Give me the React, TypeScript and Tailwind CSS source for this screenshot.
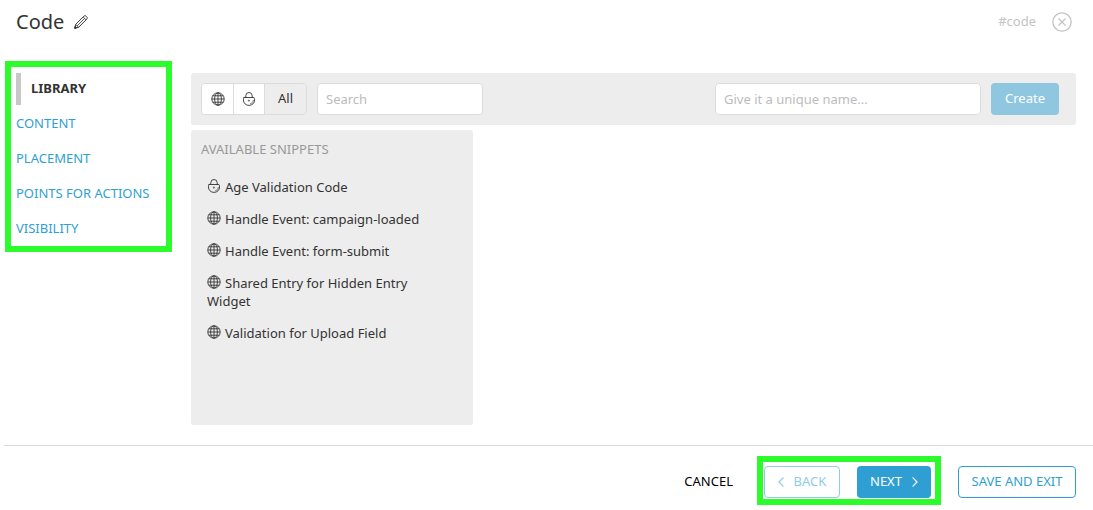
import { useState } from 'react';

type Scope = 'global' | 'private';

type Snippet = {
  name: string;
  scope: Scope;
};

const snippets: Snippet[] = [
  { name: 'Age Validation Code', scope: 'private' },
  { name: 'Handle Event: campaign-loaded', scope: 'global' },
  { name: 'Handle Event: form-submit', scope: 'global' },
  { name: 'Shared Entry for Hidden Entry Widget', scope: 'global' },
  { name: 'Validation for Upload Field', scope: 'global' },
];

const sections = ['Library', 'Content', 'Placement', 'Points for Actions', 'Visibility'];

const toAnchor = (text: string) => text.toLowerCase().replace(/\s+/g, '-');

function GlobeIcon({ className = '' }: { className?: string }) {
  return (
    <svg
      className={className}
      width="14"
      height="14"
      viewBox="0 0 14 14"
      fill="none"
      stroke="currentColor"
      strokeWidth="0.9"
      aria-hidden="true"
    >
      <circle cx="7" cy="7" r="6.2" />
      <ellipse cx="7" cy="7" rx="3.4" ry="6.2" />
      <path d="M7 0.8v12.4M0.8 7h12.4M1.7 3.8h10.6M1.7 10.2h10.6" />
    </svg>
  );
}

function LockIcon({ className = '' }: { className?: string }) {
  return (
    <svg
      className={className}
      width="14"
      height="14"
      viewBox="0 0 14 14"
      fill="none"
      stroke="currentColor"
      strokeWidth="0.9"
      strokeLinecap="round"
      strokeLinejoin="round"
      aria-hidden="true"
    >
      <path d="M2.1 5.5h9.8c0.5 0.8 0.7 1.6 0.7 2.4 0 3.2-2.4 5.5-5.6 5.5S1.400 11.100 1.400 7.900c0-0.800 0.200-1.600 0.700-2.400z" />
      <path d="M3.800 5.400V3.700a3.200 3.200 0 0 1 6.400 0v1.700" />
      <path d="M6.400 8.200h1.200L7 9.200z" fill="currentColor" strokeWidth="0.500" />
      <path d="M8.800 11.600h0.100M9.900 10.900h0.100M10.800 9.900h0.100M11.200 8.700h0.100" />
    </svg>
  );
}

function PencilIcon() {
  return (
    <svg
      width="14"
      height="14"
      viewBox="0 0 14 14"
      fill="none"
      stroke="currentColor"
      strokeWidth="1"
      strokeLinejoin="round"
      aria-hidden="true"
    >
      <path d="M0.700 13.300l1-3.900 8.100-8.100c0.700-0.700 1.700-0.700 2.400 0l0.500 0.500c0.700 0.700 0.700 1.700 0 2.400l-8.100 8.100z" />
      <path d="M1.700 9.400l2.900 2.900M9.100 2l2.900 2.900M3.100 10.900l7.500-7.500" strokeWidth="0.800" />
      <path d="M0.700 13.300l0.500-1.900 1.400 1.400z" fill="currentColor" />
    </svg>
  );
}

function Chevron({ direction }: { direction: 'left' | 'right' }) {
  return (
    <svg
      width="6"
      height="10"
      viewBox="0 0 6 10"
      fill="none"
      stroke="currentColor"
      strokeWidth="1.2"
      strokeLinecap="round"
      strokeLinejoin="round"
      aria-hidden="true"
    >
      <path d={direction === 'left' ? 'M5 0.8L1 5l4 4.2' : 'M1 0.8L5 5 1 9.2'} />
    </svg>
  );
}

export default function App() {
  const [active, setActive] = useState('Library');
  const [filter, setFilter] = useState<Scope | 'all'>('all');
  const [query, setQuery] = useState('');
  const [name, setName] = useState('');

  const visible = snippets.filter(
    (snippet) =>
      (filter === 'all' || snippet.scope === filter) &&
      snippet.name.toLowerCase().includes(query.toLowerCase()),
  );

  const filterTone = (value: Scope | 'all') =>
    filter === value ? 'bg-[#ededed]' : 'bg-white';

  return (
    <div className="min-h-screen bg-white font-['Noto_Sans',sans-serif] text-[13px] text-[#333]">
      <header className="flex h-11 items-center justify-between pr-[21px] pl-4">
        <div className="flex items-center gap-2.5">
          <h1 className="text-xl">Code</h1>
          <button type="button" aria-label="Rename">
            <PencilIcon />
          </button>
        </div>
        <div className="flex items-center gap-4 text-[#c4c4c4]">
          <span>#code</span>
          <button type="button" aria-label="Close">
            <svg
              width="20"
              height="20"
              viewBox="0 0 20 20"
              fill="none"
              stroke="currentColor"
              strokeWidth="1.3"
              aria-hidden="true"
            >
              <circle cx="10" cy="10" r="9.2" />
              <path d="M6.500 6.500l7 7M13.500 6.500l-7 7" />
            </svg>
          </button>
        </div>
      </header>

      <div className="flex items-start pt-[17px] pr-[17px] pl-[5px]">
        <nav className="w-[167px] shrink-0 border-[6px] border-[#2cfb2c] px-[5px] pt-1.5 uppercase">
          <ul>
            {sections.map((section) => (
              <li key={section}>
                <a
                  className={
                    active === section
                      ? 'mb-px flex h-8 items-center border-l-[5px] border-[#c8c8c8] pl-2.5 font-bold'
                      : 'flex h-[35px] items-center text-[#2f9fd3]'
                  }
                  href={`#${toAnchor(section)}`}
                  onClick={() => setActive(section)}
                >
                  {section}
                </a>
              </li>
            ))}
          </ul>
        </nav>

        <main className="ml-[19px] min-w-0 flex-1 pt-3">
          <div className="flex items-center justify-between gap-4 rounded-[3px] bg-[#ededed] py-2.5 pr-[17px] pl-2.5">
            <div className="flex gap-2.5">
              <div className="flex h-8 divide-x divide-[#dcdcdc] overflow-hidden rounded border border-[#dcdcdc]">
                <button
                  className={`flex w-8 items-center justify-center ${filterTone('global')}`}
                  type="button"
                  aria-label="Global snippets"
                  onClick={() => setFilter('global')}
                >
                  <GlobeIcon />
                </button>
                <button
                  className={`flex w-[31px] items-center justify-center ${filterTone('private')}`}
                  type="button"
                  aria-label="Private snippets"
                  onClick={() => setFilter('private')}
                >
                  <LockIcon />
                </button>
                <button
                  className={`w-[41px] ${filterTone('all')}`}
                  type="button"
                  onClick={() => setFilter('all')}
                >
                  All
                </button>
              </div>
              <input
                className="h-8 w-[166px] rounded border border-[#dcdcdc] bg-white px-2 outline-none placeholder:text-[#bcbcbc]"
                type="search"
                placeholder="Search"
                aria-label="Search snippets"
                value={query}
                onChange={(event) => setQuery(event.target.value)}
              />
            </div>

            <form className="flex gap-2.5" onSubmit={(event) => event.preventDefault()}>
              <input
                className="h-8 w-[266px] rounded border border-[#dcdcdc] bg-white px-2 outline-none placeholder:text-[#bcbcbc]"
                type="text"
                placeholder="Give it a unique name..."
                aria-label="Snippet name"
                value={name}
                onChange={(event) => setName(event.target.value)}
              />
              <button className="h-8 w-[68px] rounded bg-[#8fc7e1] text-white" type="submit">
                Create
              </button>
            </form>
          </div>

          <section className="mt-[5px] min-h-[295px] w-[282px] rounded-[3px] bg-[#ededed] p-2.5">
            <h2 className="leading-[18px] text-[#999] uppercase">Available Snippets</h2>
            <ul className="pt-[13px]">
              {visible.map((snippet) => (
                <li key={snippet.name}>
                  <button
                    className="w-full py-[7px] pr-8 pl-1.5 text-left leading-[18px]"
                    type="button"
                  >
                    {snippet.scope === 'global' ? (
                      <GlobeIcon className="mr-1 inline align-[-1px]" />
                    ) : (
                      <LockIcon className="mr-1 inline align-[-1px]" />
                    )}
                    {snippet.name}
                  </button>
                </li>
              ))}
            </ul>
          </section>
        </main>
      </div>

      <footer className="mt-5 ml-1 flex items-start justify-end border-t border-[#d9d9d9] pt-2.5 pr-[17px]">
        <button className="mt-2.5 mr-6 h-8 text-black" type="button">
          CANCEL
        </button>
        <div className="mr-[17px] flex gap-[17px] border-[6px] border-[#2cfb2c] pt-1 pr-1 pb-px pl-px">
          <button
            className="flex h-8 w-[76px] items-center justify-center gap-2.5 rounded border border-[#8fcbe8] text-[#8fcbe8]"
            type="button"
            disabled
          >
            <Chevron direction="left" />
            BACK
          </button>
          <button
            className="flex h-8 w-[74px] items-center justify-center gap-2.5 rounded bg-[#2f9fd3] text-white"
            type="button"
          >
            NEXT
            <Chevron direction="right" />
          </button>
        </div>
        <button
          className="mt-2.5 h-8 w-[118px] rounded border border-[#2f9fd3] text-[#2f9fd3]"
          type="button"
        >
          SAVE AND EXIT
        </button>
      </footer>
    </div>
  );
}
